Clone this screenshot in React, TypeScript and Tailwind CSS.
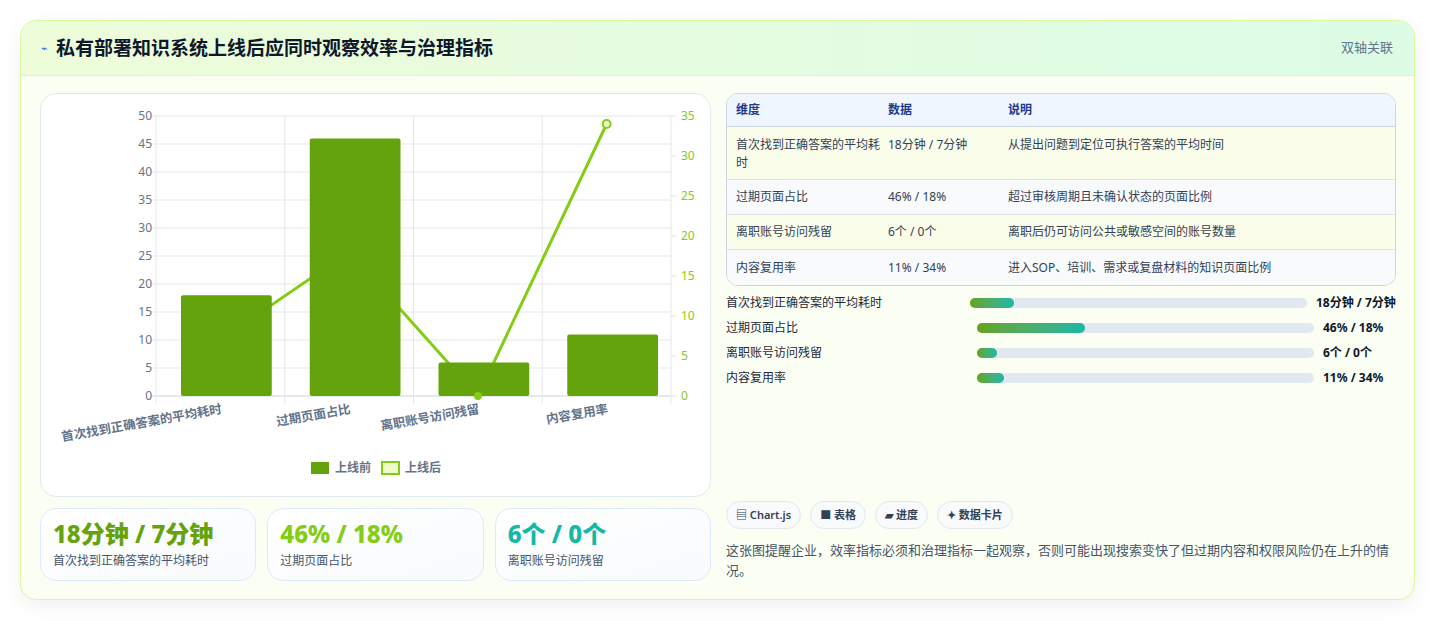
import React from "react";

const F = { fontFamily: '"Noto Sans","Noto Sans CJK SC",sans-serif' };
const cats = ["首次找到正确答案的平均耗时", "过期页面占比", "离职账号访问残留", "内容复用率"];
const before = [18, 46, 6, 11];
const after = [7, 18, 0, 34];

function Chart() {
  const L = 155, R = 670, T = 115, B = 395;
  const H = B - T;
  const cw = (R - L) / 4;
  const yl = (v: number) => B - (v / 50) * H;
  const yr = (v: number) => B - (v / 35) * H;
  const pts = after.map((v, i) => [L + cw * (i + 0.5), yr(v)]);
  return (
    <svg width="670" height="403" viewBox="40 93 670 403" className="block">
      {[0, 5, 10, 15, 20, 25, 30, 35, 40, 45, 50].map((v) => (
        <g key={v}>
          <line x1={L - 5} x2={R} y1={yl(v)} y2={yl(v)} stroke={v === 0 ? "#cbd5e1" : "#e5e7eb"} />
          <text x={L - 4} y={yl(v) + 4} textAnchor="end" fontSize="12" fill="#64748b">{v}</text>
        </g>
      ))}
      {[0, 5, 10, 15, 20, 25, 30, 35].map((v) => (
        <g key={v}>
          <line x1={R} x2={R + 5} y1={yr(v)} y2={yr(v)} stroke="#e5e7eb" />
          <text x={R + 10} y={yr(v) + 4} fontSize="12" fill="#84cc16">{v}</text>
        </g>
      ))}
      {[0, 1, 2, 3, 4].map((i) => (
        <line key={i} x1={L + cw * i} x2={L + cw * i} y1={T} y2={B + 8} stroke="#e5e7eb" />
      ))}
      <polyline points={pts.map((p) => p.join(",")).join(" ")} fill="none" stroke="#84cc16" strokeWidth="3" />
      {before.map((v, i) => (
        <rect key={i} x={L + cw * i + 25} y={yl(v)} width={cw - 38} height={B - yl(v)} fill="#65a30d" rx="2" />
      ))}
      <circle cx={pts[2][0]} cy={pts[2][1]} r="4" fill="#84cc16" />
      <circle cx={pts[3][0]} cy={pts[3][1]} r="4" fill="#ecfccb" stroke="#84cc16" strokeWidth="2" />
      {cats.map((c, i) => (
        <text key={c} x={L + cw * (i + 0.5) + 2} y={412} textAnchor="end" fontSize="12.5" fontWeight="600" fill="#64748b"
          transform={`rotate(-10 ${L + cw * (i + 0.5) + 2} 412)`}>{c}</text>
      ))}
      <rect x={310} y={461} width={18} height={12} fill="#65a30d" />
      <text x={334} y={471} fontSize="12" fill="#64748b" fontWeight="600">上线前</text>
      <rect x={381} y={461} width={17} height={12} fill="#ecfccb" stroke="#84cc16" strokeWidth="2" />
      <text x={404} y={471} fontSize="12" fill="#64748b" fontWeight="600">上线后</text>
    </svg>
  );
}

const rows = [
  ["首次找到正确答案的平均耗时", "18分钟 / 7分钟", "从提出问题到定位可执行答案的平均时间"],
  ["过期页面占比", "46% / 18%", "超过审核周期且未确认状态的页面比例"],
  ["离职账号访问残留", "6个 / 0个", "离职后仍可访问公共或敏感空间的账号数量"],
  ["内容复用率", "11% / 34%", "进入SOP、培训、需求或复盘材料的知识页面比例"],
];
const bars = [
  ["首次找到正确答案的平均耗时", 13, "18分钟 / 7分钟", "ml-[244px]"],
  ["过期页面占比", 32, "46% / 18%", "ml-[251px]"],
  ["离职账号访问残留", 6, "6个 / 0个", "ml-[251px]"],
  ["内容复用率", 8, "11% / 34%", "ml-[251px]"],
];

export default function App() {
  return (
    <div className="w-[1435px] h-[621px] bg-white pt-5 pl-5" style={F}>
      <div className="w-[1395px] h-[580px] rounded-2xl border border-[#d9f99d] bg-[#fbfef3] overflow-hidden shadow-[0_6px_20px_rgba(0,0,0,0.06)]">
        <div className="h-[55px] flex items-center justify-between px-5 bg-gradient-to-r from-[#eefcd9] to-[#dcfce7] border-b border-[#e2eed9]">
          <div className="flex items-center gap-2">
            <span className="text-[11px] text-[#2563eb]">⌁</span>
            <span className="text-[19px] font-bold text-[#0f172a]">私有部署知识系统上线后应同时观察效率与治理指标</span>
          </div>
          <span className="text-[13px] text-[#64748b] mr-[1px]">双轴关联</span>
        </div>
        <div className="flex gap-[15px] px-[19px] pt-[17px]">
          <div className="w-[671px] flex flex-col gap-[11px]">
            <div className="h-[404px] rounded-2xl border border-[#e2e8f0] bg-white overflow-hidden"><Chart /></div>
            <div className="grid grid-cols-3 gap-[11px]">
              {[["18分钟 / 7分钟", "text-[#65a30d]", "首次找到正确答案的平均耗时"], ["46% / 18%", "text-[#84cc16]", "过期页面占比"], ["6个 / 0个", "text-[#14b8a6]", "离职账号访问残留"]].map(([v, c, l]) => (
                <div key={l} className="h-[73px] rounded-2xl border border-[#dbeafe] bg-gradient-to-br from-white to-[#f8fafc] px-3 pt-[9px]">
                  <div className={`text-[24px] font-extrabold leading-8 ${c}`}>{v}</div>
                  <div className="text-[12px] text-[#475569] mt-[2px]">{l}</div>
                </div>
              ))}
            </div>
          </div>
          <div className="w-[670px] flex flex-col">
            <div className="rounded-xl border border-[#cbd5e1] overflow-hidden text-[12px] text-[#334155]">
              <div className="flex bg-[#eff6ff] h-[33px] items-center font-semibold text-[#1e3a8a] border-b border-[#cbd5e1]">
                <div className="w-[161px] pl-[9px]">维度</div><div className="w-[120px]">数据</div><div>说明</div>
              </div>
              {rows.map((r, i) => (
                <div key={i} className={`flex ${i === 0 ? "h-[53px] pt-[9px]" : "h-[35px] items-center"} ${i % 2 ? "bg-[#f8fafc]" : "bg-[#fafde9]"} ${i < 3 ? "border-b border-[#dbe3ec]" : ""}`}>
                  <div className="w-[161px] pl-[9px] pr-2 leading-[18px]">{r[0]}</div>
                  <div className="w-[120px]">{r[1]}</div>
                  <div>{r[2]}</div>
                </div>
              ))}
            </div>
            <div className="mt-[9px] flex flex-col gap-[9px] text-[12px]">
              {bars.map(([l, p, v, ml]) => (
                <div key={l as string} className="flex items-center h-[16px]">
                  <div className="w-0 whitespace-nowrap text-[#1e293b]">{l}</div>
                  <div className={`${ml} w-[337px] h-[10px] rounded-full bg-[#e2e8f0]`}>
                    <div className="h-full rounded-full bg-gradient-to-r from-[#65a30d] to-[#14b8a6]" style={{ width: `${p}%` }} />
                  </div>
                  <div className="ml-[9px] font-bold text-[#0f172a] whitespace-nowrap">{v}</div>
                </div>
              ))}
            </div>
            <div className="mt-[115px] flex gap-[9px] text-[11px] font-semibold text-[#334155]">
              {["▤ Chart.js", "■ 表格", "▰ 进度", "✦ 数据卡片"].map((t) => (
                <span key={t} className="h-[28px] px-[9px] flex items-center rounded-full border border-[#e2e8f0] bg-[#f8fafc]">{t}</span>
              ))}
            </div>
            <p className="mt-[11px] text-[13px] leading-[20px] text-[#475569]">这张图提醒企业，效率指标必须和治理指标一起观察，否则可能出现搜索变快了但过期内容和权限风险仍在上升的情况。</p>
          </div>
        </div>
      </div>
    </div>
  );
}
